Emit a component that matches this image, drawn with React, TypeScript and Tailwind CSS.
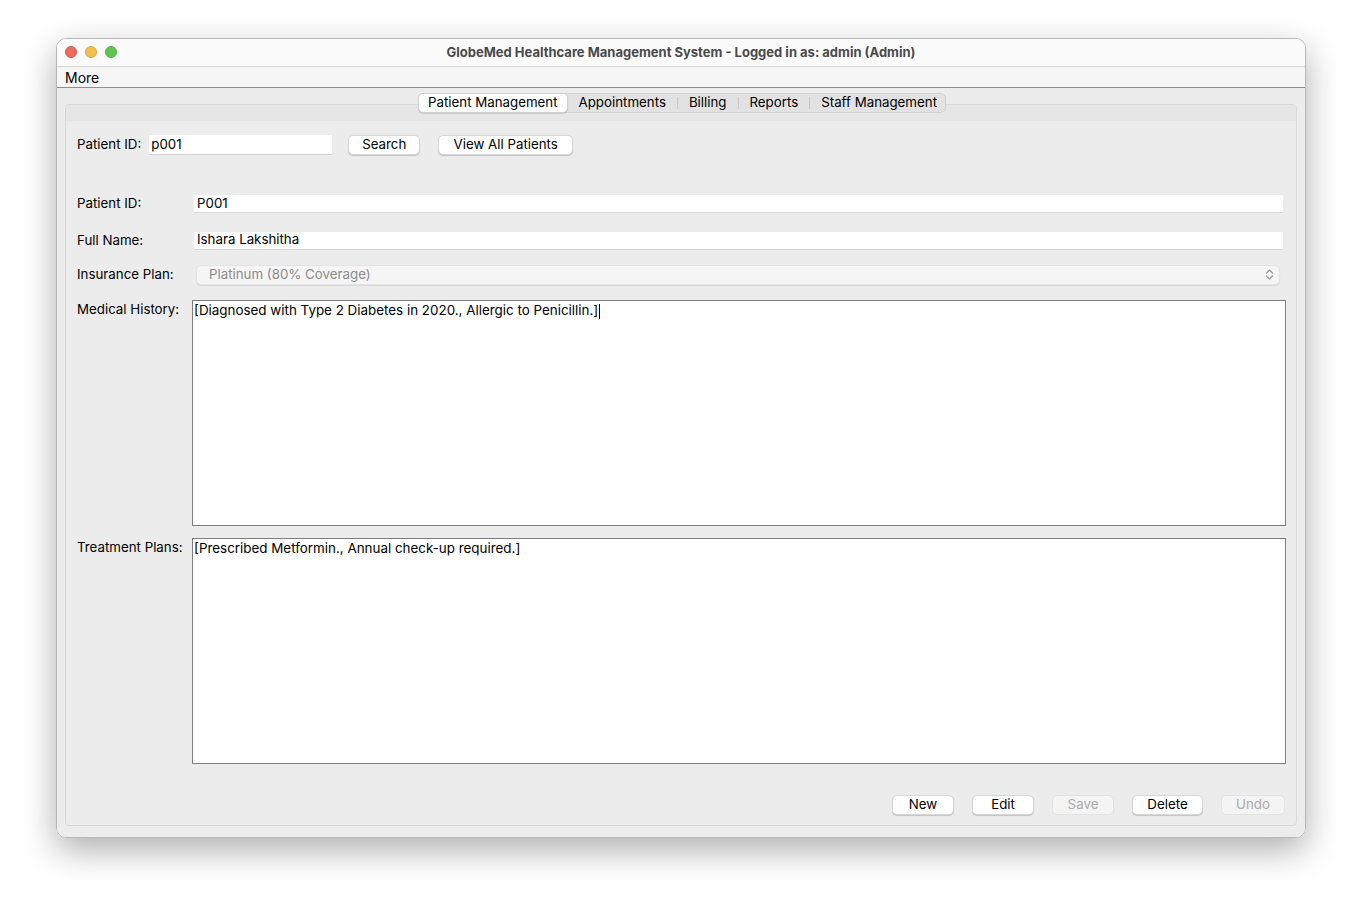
import React from 'react';

const font = { fontFamily: 'Inter, "Noto Sans", sans-serif' };

function TrafficLights() {
  return (
    <div className="absolute left-[8px] top-[7px] flex gap-[8px]">
      <span className="w-[12px] h-[12px] rounded-full bg-[#ec6a5e] border border-[#d25a4e]" />
      <span className="w-[12px] h-[12px] rounded-full bg-[#f4bf4f] border border-[#d9a73f]" />
      <span className="w-[12px] h-[12px] rounded-full bg-[#61c554] border border-[#52ad47]" />
    </div>
  );
}

const tabs = ['Patient Management', 'Appointments', 'Billing', 'Reports', 'Staff Management'];

function TabBar() {
  return (
    <div className="flex justify-center relative z-10 pl-[2px]">
      <div className="flex items-center h-[20px] bg-[#e2e2e2] border border-[#d2d2d2] rounded-[5px]">
        {tabs.map((t, i) => (
          <React.Fragment key={t}>
            {i > 1 && <span className="w-px h-[12px] bg-[#c9c9c9]" />}
            {i === 0 ? (
              <div className="h-[20px] -my-px -ml-px px-[9px] flex items-center bg-white border border-[#cfcfcf] rounded-[5px] shadow-[0_1px_1px_rgba(0,0,0,0.12)] text-[13.3px] text-black">
                {t}
              </div>
            ) : (
              <div className={`pl-[11px] ${i === tabs.length - 1 ? 'pr-[8px]' : 'pr-[11px]'} text-[13.3px] text-black`}>{t}</div>
            )}
          </React.Fragment>
        ))}
      </div>
    </div>
  );
}

function Button({ label, width, disabled }: { label: string; width: string; disabled?: boolean }) {
  return (
    <div
      className={`h-[20px] ${width} flex items-center justify-center rounded-[5px] text-[13.3px] ${
        disabled
          ? 'bg-[#f4f4f4] text-[#a9a9a9] border border-[#e2e2e2]'
          : 'bg-white text-black border border-[#d6d6d6] shadow-[0_1px_1px_rgba(0,0,0,0.18)]'
      }`}
    >
      {label}
    </div>
  );
}

function FieldRow({ label, value, top }: { label: string; value: string; top: string }) {
  return (
    <div className={`flex items-center ${top}`}>
      <div className="w-[117px] shrink-0 text-[13.3px] text-black">{label}</div>
      <div className="flex-1 h-[18px] bg-white border-b border-[#d6d6d6] flex items-center pl-[3px] text-[13.3px] text-black">
        {value}
      </div>
    </div>
  );
}

function AreaRow({ label, value, top, caret }: { label: string; value: string; top: string; caret?: boolean }) {
  return (
    <div className={`flex ${top}`}>
      <div className="w-[115px] shrink-0 text-[13.3px] text-black">{label}</div>
      <div className="flex-1 -mr-[3px] h-[226px] bg-white border border-[#7d7d7d] px-[1px] text-[13.4px] text-black leading-[18px]">
        {value}
        {caret && <span className="inline-block w-px h-[15px] bg-black align-middle ml-px" />}
      </div>
    </div>
  );
}

export default function App() {
  return (
    <div className="w-[1362px] h-[912px] bg-white pt-[38px] pl-[56px]" style={font}>
      <div className="w-[1250px] h-[800px] rounded-[10px] overflow-hidden flex flex-col border border-[#b8b8b8] shadow-[0_12px_34px_rgba(0,0,0,0.32)]">
        {/* title bar */}
        <div className="relative h-[28px] shrink-0 bg-[#fbfbfb] border-b border-[#d6d6d6] flex items-center justify-center">
          <TrafficLights />
          <span className="text-[13px] font-bold text-[#4a4a4a]">
            GlobeMed Healthcare Management System - Logged in as: admin (Admin)
          </span>
        </div>
        {/* menu bar */}
        <div className="h-[21px] shrink-0 bg-[#f6f6f6] border-b border-[#8e8e8e] flex items-center pl-[8px]">
          <span className="text-[14px] text-black">More</span>
        </div>
        {/* content */}
        <div className="flex-1 bg-[#ececec] px-[8px] pt-[5px] pb-[11px] flex flex-col">
          <TabBar />
          <div className="-mt-[9px] flex-1 rounded-[4px] border border-[#d8d8d8] bg-[#ececec] flex flex-col overflow-hidden">
            <div className="h-[16px] bg-[#e6e6e6] shrink-0" />
            <div className="flex-1 flex flex-col pl-[11px] pr-[13px] pb-[10px]">
              {/* search row */}
              <div className="flex items-center mt-[14px]">
                <span className="text-[13.3px] text-black">Patient ID:</span>
                <div className="ml-[8px] w-[183px] h-[20px] bg-white border-b border-[#d6d6d6] flex items-center pl-[2px] text-[13.3px] text-black">
                  p001
                </div>
                <div className="ml-[16px]">
                  <Button label="Search" width="w-[72px]" />
                </div>
                <div className="ml-[18px]">
                  <Button label="View All Patients" width="w-[135px]" />
                </div>
              </div>

              <FieldRow label="Patient ID:" value="P001" top="mt-[39px]" />
              <FieldRow label="Full Name:" value="Ishara Lakshitha" top="mt-[17px]" />

              <div className="flex items-center mt-[14px]">
                <div className="w-[119px] shrink-0 text-[13.3px] text-black">Insurance Plan:</div>
                <div className="flex-1 mr-[3px] h-[20px] bg-[#f5f5f5] rounded-[5px] border border-[#e3e3e3] shadow-[0_1px_1px_rgba(0,0,0,0.08)] flex items-center pl-[12px] pr-[5px] text-[13.3px] text-[#8c8c8c]">
                  <span className="flex-1">Platinum (80% Coverage)</span>
                  <svg width="9" height="13" viewBox="0 0 9 13" fill="none" stroke="#9a9a9a" strokeWidth="1.3" strokeLinecap="round" strokeLinejoin="round">
                    <path d="M1.5 5 L4.5 2 L7.5 5" />
                    <path d="M1.5 8 L4.5 11 L7.5 8" />
                  </svg>
                </div>
              </div>

              <AreaRow
                label="Medical History:"
                value="[Diagnosed with Type 2 Diabetes in 2020., Allergic to Penicillin.]"
                top="mt-[15px]"
                caret
              />
              <AreaRow
                label="Treatment Plans:"
                value="[Prescribed Metformin., Annual check-up required.]"
                top="mt-[12px]"
              />

              <div className="flex justify-end mt-[31px] -mr-[2px]">
                <Button label="New" width="w-[62px]" />
                <div className="ml-[18px]"><Button label="Edit" width="w-[62px]" /></div>
                <div className="ml-[18px]"><Button label="Save" width="w-[62px]" disabled /></div>
                <div className="ml-[18px]"><Button label="Delete" width="w-[71px]" /></div>
                <div className="ml-[18px]"><Button label="Undo" width="w-[64px]" disabled /></div>
              </div>
            </div>
          </div>
        </div>
      </div>
    </div>
  );
}
